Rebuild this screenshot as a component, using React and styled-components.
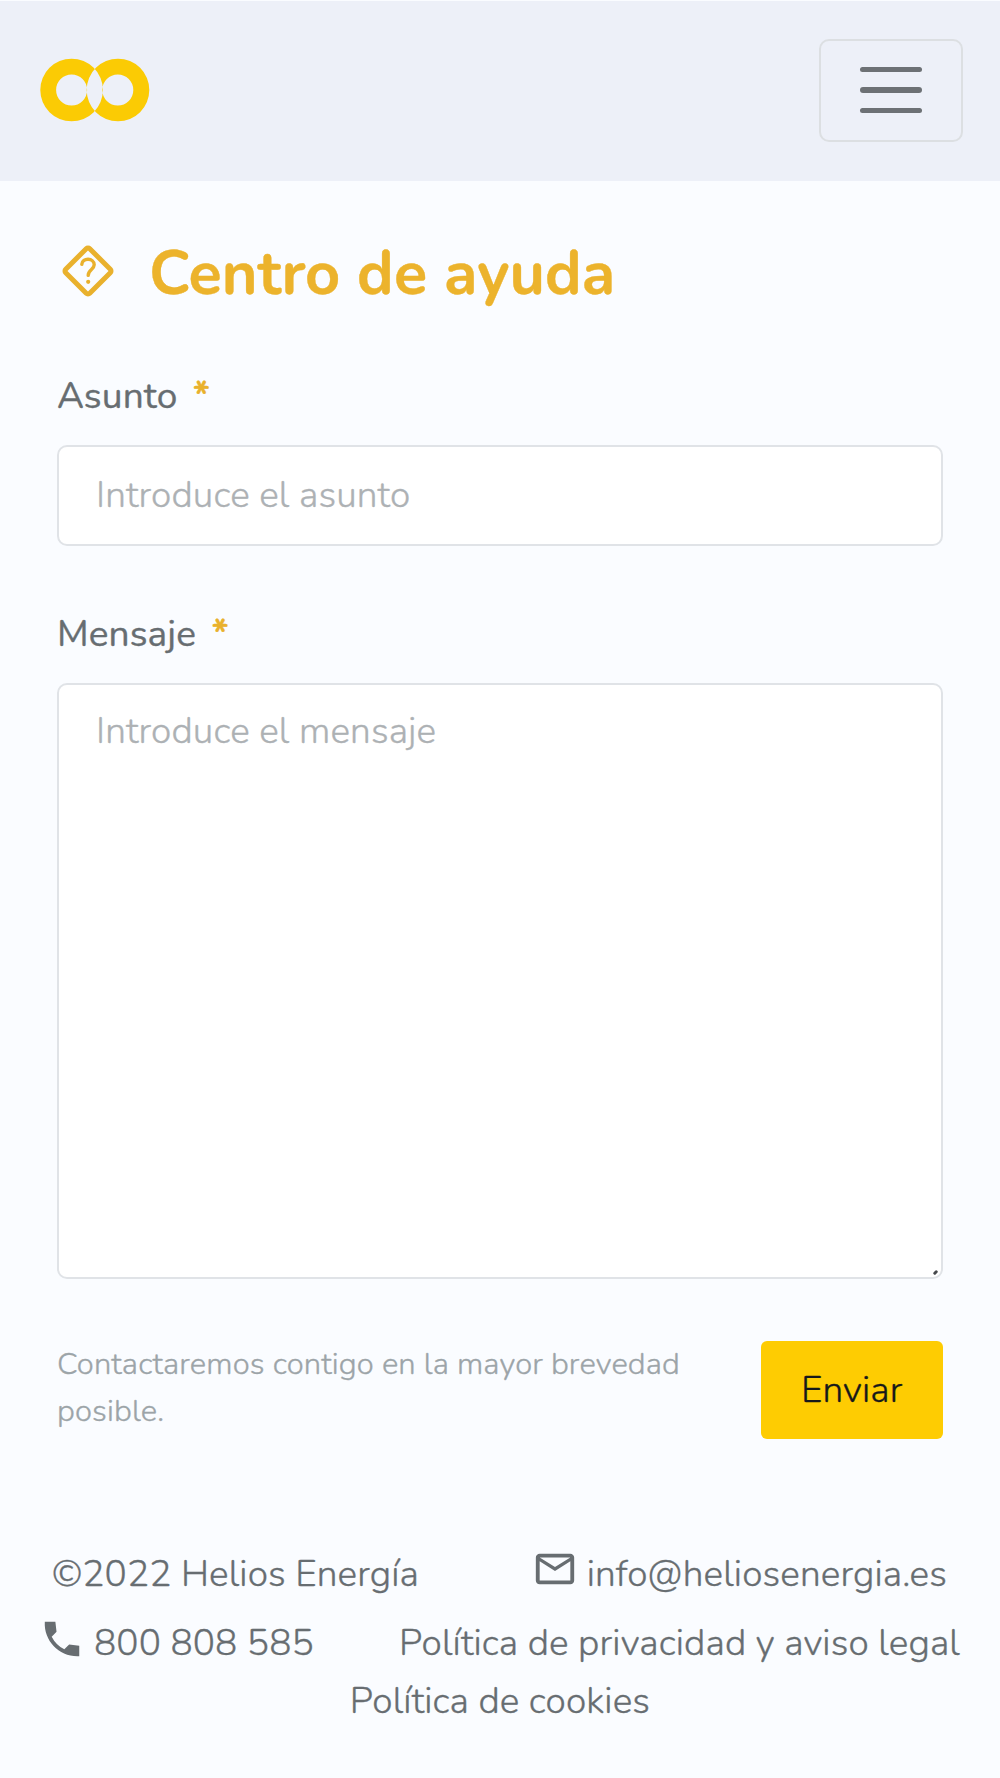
import styled, { createGlobalStyle } from 'styled-components';
import { MdMailOutline } from 'react-icons/md';

const App = () => {
  return (
    <>
      <GlobalStyle />
      <Page>
        <Header>
          <Logo viewBox="0 0 110 64" aria-label="Helios Energía">
            <path
              fillRule="evenodd"
              d="M0.3 32a31.3 31.3 0 1 0 62.6 0a31.3 31.3 0 1 0 -62.6 0z M16.1 32a15.5 15.5 0 1 0 31 0a15.5 15.5 0 1 0 -31 0z M46.7 32a31.3 31.3 0 1 0 62.6 0a31.3 31.3 0 1 0 -62.6 0z M62.3 32a15.5 15.5 0 1 0 31 0a15.5 15.5 0 1 0 -31 0z"
            />
          </Logo>
          <MenuButton aria-label="Menú">
            <MenuLine />
            <MenuLine />
            <MenuLine />
          </MenuButton>
        </Header>

        <Main>
          <TitleRow>
            <HelpIcon viewBox="-26 -26 52 52">
              <rect x="-17" y="-17" width="34" height="34" rx="2.5" strokeWidth="5" transform="rotate(45)" />
              <path d="M-6.2 -6.6C-5.8 -13.6 6.2 -13.4 6.2 -6.2C6.2 -1.6 0.2 -1.4 0.2 4.4" strokeWidth="3.4" />
              <circle cx="0.2" cy="10.8" r="2.1" />
            </HelpIcon>
            <Title>Centro de ayuda</Title>
          </TitleRow>

          <Label htmlFor="asunto">
            Asunto <Required>*</Required>
          </Label>
          <Input id="asunto" placeholder="Introduce el asunto" />

          <Label htmlFor="mensaje">
            Mensaje <Required>*</Required>
          </Label>
          <MessageBox>
            <TextArea id="mensaje" placeholder="Introduce el mensaje" />
            <Resizer />
          </MessageBox>

          <Actions>
            <Hint>Contactaremos contigo en la mayor brevedad posible.</Hint>
            <SubmitButton>Enviar</SubmitButton>
          </Actions>
        </Main>

        <Footer>
          <FooterRow $height={69} $left={52} $right={53}>
            <span>©2022 Helios Energía</span>
            <Contact>
              <MailIcon />
              info@heliosenergia.es
            </Contact>
          </FooterRow>
          <FooterRow $height={58} $left={39} $right={40}>
            <Contact>
              <PhoneIcon viewBox="0 0 24 24">
                <path d="M21 15.46l-5.27-.61-2.52 2.52a15.045 15.045 0 0 1-6.59-6.59l2.53-2.53L8.54 3H3.03C2.45 13.18 10.82 21.55 21 20.97v-5.51z" />
              </PhoneIcon>
              800 808 585
            </Contact>
            <span>Política de privacidad y aviso legal</span>
          </FooterRow>
          <FooterRow $height={58} $center>
            <span>Política de cookies</span>
          </FooterRow>
        </Footer>
      </Page>
    </>
  );
};

const GlobalStyle = createGlobalStyle`
  * {
    box-sizing: border-box;
  }

  body {
    margin: 0;
    background-color: #fafcff;
  }

  body, input, textarea, button {
    font-family: 'Nunito', 'Lato', sans-serif;
    font-size: 37px;
    font-weight: 300;
    line-height: 48px;
    letter-spacing: 0.12px;
    -webkit-text-stroke-width: 0.35px;
  }
`;

const Page = styled.div`
  width: 1000px;
  height: 1778px;
  overflow: hidden;
  color: #676d71;
`;

const Header = styled.header`
  height: 181px;
  padding: 0 37px 2px 40px;
  border-top: 1px solid #fafcff;
  background-color: #edf0f8;
  display: flex;
  align-items: center;
  justify-content: space-between;
`;

const Logo = styled.svg`
  width: 110px;
  height: 64px;
  fill: #fbcb04;
`;

const MenuButton = styled.button`
  width: 144px;
  height: 103px;
  padding: 0;
  border: 2px solid #dcdfe2;
  border-radius: 10px;
  background: none;
  display: flex;
  flex-direction: column;
  align-items: center;
  justify-content: center;
  gap: 15px;
`;

const MenuLine = styled.span`
  width: 62px;
  height: 5.5px;
  border-radius: 3px;
  background-color: #6d7175;
`;

const Main = styled.main`
  padding: 52px 57.5px 0 57px;
`;

const TitleRow = styled.div`
  height: 80px;
  margin-bottom: 59px;
  padding-left: 5px;
  display: flex;
  align-items: center;
  gap: 35px;
`;

const HelpIcon = styled.svg`
  width: 52px;
  height: 52px;
  margin-bottom: 5px;
  fill: none;
  stroke: #e9b12d;
  stroke-linecap: round;

  circle {
    fill: #e9b12d;
    stroke: none;
  }
`;

const Title = styled.h1`
  margin: 0;
  padding-top: 1px;
  color: #ecb32c;
  font-size: 61.2px;
  font-weight: 700;
  line-height: 80px;
`;

const Label = styled.label`
  display: block;
  margin-bottom: 25px;
  font-size: 37px;
  font-weight: 400;
`;

const Required = styled.span`
  margin-left: 6px;
  color: #e9b12d;
  font-weight: 700;
`;

const Input = styled.input`
  display: block;
  width: 100%;
  height: 101px;
  margin-bottom: 64px;
  padding: 0 37px 1px;
  border: 2px solid #e0e3e7;
  border-radius: 10px;
  background-color: #fff;
  outline: none;

  &::placeholder {
    color: #adb1b4;
    opacity: 1;
  }
`;

const MessageBox = styled.div`
  position: relative;
  margin-bottom: 62px;
`;

const TextArea = styled(Input).attrs({ as: 'textarea' })`
  height: 596px;
  margin-bottom: 0;
  padding: 22px 37px;
  resize: none;
`;

const Resizer = styled.span`
  position: absolute;
  right: 5px;
  bottom: 5px;
  width: 5px;
  height: 3px;
  border-radius: 2px;
  background-color: #45484b;
  transform: rotate(-45deg);
`;

const Actions = styled.div`
  display: flex;
  align-items: flex-start;
  justify-content: space-between;
`;

const Hint = styled.p`
  width: 650px;
  margin: 0;
  color: #9ca4a8;
  font-size: 31px;
  line-height: 47px;
`;

const SubmitButton = styled.button`
  width: 181.5px;
  height: 98px;
  padding: 0;
  border: none;
  border-radius: 6px;
  background-color: #fecc02;
  color: #16181a;
`;

const Footer = styled.footer`
  padding-top: 106px;
  line-height: 58px;
`;

const FooterRow = styled.div`
  height: ${(p) => p.$height}px;
  padding: 0 ${(p) => p.$right || 0}px 0 ${(p) => p.$left || 0}px;
  display: flex;
  justify-content: ${(p) => (p.$center ? 'center' : 'space-between')};
`;

const Contact = styled.span`
  display: flex;
  gap: 9px;
`;

const MailIcon = styled(MdMailOutline)`
  width: 46px;
  height: 46px;
  margin-top: 1px;
`;

const PhoneIcon = styled.svg`
  width: 46px;
  height: 46px;
  margin-top: 1.5px;
  fill: currentColor;
`;

export default App;
